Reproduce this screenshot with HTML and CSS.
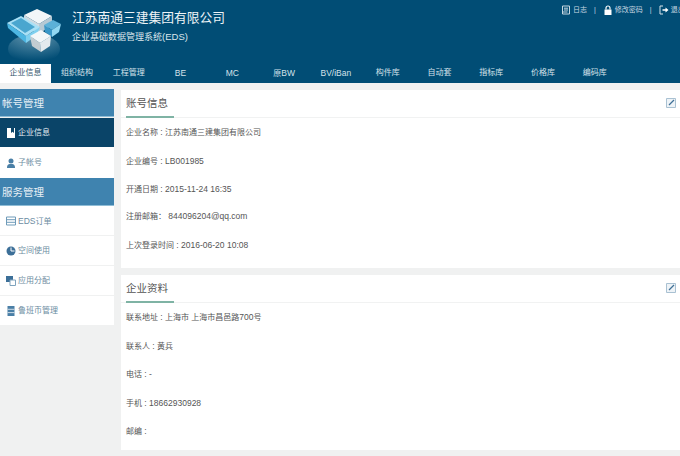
FILE: index.html
```html
<!DOCTYPE html>
<html lang="zh">
<head>
<meta charset="utf-8">
<title>企业基础数据管理系统</title>
<link rel="stylesheet" href="styles.css">
</head>
<body>
<header class="top">
  <div class="brand">
    <svg class="logo" width="66" height="64" viewBox="0 0 66 64">
      <defs>
        <radialGradient id="glow" cx="50%" cy="0%" r="90%">
          <stop offset="0" stop-color="#8fb6c8" stop-opacity=".75"/>
          <stop offset="1" stop-color="#8fb6c8" stop-opacity="0"/>
        </radialGradient>
      </defs>
      <ellipse cx="34" cy="49" rx="26" ry="15" fill="url(#glow)"/>
      <path d="M24 15l13-6 15 7-13 8z" fill="#f2f6f8"/>
      <path d="M24 15v10l15 9V24z" fill="#cfdbe2"/>
      <path d="M39 24l13-8v9l-13 9z" fill="#b6c9d4"/>
      <path d="M7 23l14-7 19 11-14 9z" fill="#a9e0f5"/>
      <path d="M11 23l10-5 14 9-10 6z" fill="#4aa6cf"/>
      <path d="M7 23l1 5 18 15V36z" fill="#4db6e2"/>
      <path d="M26 36l14-9-3 8-11 8z" fill="#7fd0ef"/>
      <path d="M44 25l9-5 8 4-9 6z" fill="#5cb1d8"/>
      <path d="M44 25l1 7 7 5v-7z" fill="#3a97c7"/>
      <path d="M52 30l9-6-2 8-7 5z" fill="#92d8f2"/>
      <path d="M30 36l11-6 10 6-11 7z" fill="#f4f7f8"/>
      <path d="M30 36l2 10 9 6-1-9z" fill="#c3ccd1"/>
      <path d="M40 43l11-7-1 10-9 6z" fill="#e4eaed"/>
    </svg>
    <div class="titles">
      <h1 class="company">江苏南通三建集团有限公司</h1>
      <p class="system">企业基础数据管理系统<span class="sys-code">(EDS)</span></p>
    </div>
  </div>
  <div class="tools">
    <span class="tool">
      <svg class="tool-icon" width="10" height="10" viewBox="0 0 10 10"><path d="M1.500 1h7v8h-7zM3 3.200h4M3 5h4M1.500 7h5" fill="none" stroke="#c8d8e2" stroke-width="1"/></svg>
      日志
    </span>
    <span class="sep">|</span>
    <span class="tool">
      <svg class="tool-icon" width="10" height="10" viewBox="0 0 10 10"><path d="M1.500 4.500h7V10h-7z" fill="#fff"/><path d="M3 4.500V3a2 2 0 0 1 4 0v1.500" fill="none" stroke="#fff" stroke-width="1.200"/></svg>
      修改密码
    </span>
    <span class="sep">|</span>
    <span class="tool">
      <svg class="tool-icon" width="10" height="10" viewBox="0 0 10 10"><path d="M4 1H1v8h3" fill="none" stroke="#d8e4ea" stroke-width="1"/><path d="M3.500 4.200h3V2.500L9.500 5 6.500 7.500V5.800h-3z" fill="#fff"/></svg>
      退出
    </span>
  </div>
  <nav class="nav">
    <a class="nav-item active">企业信息</a>
    <a class="nav-item">组织结构</a>
    <a class="nav-item">工程管理</a>
    <a class="nav-item"><span class="num">BE</span></a>
    <a class="nav-item"><span class="num">MC</span></a>
    <a class="nav-item">原<span class="num">BW</span></a>
    <a class="nav-item"><span class="num">BV/iBan</span></a>
    <a class="nav-item">构件库</a>
    <a class="nav-item">自动套</a>
    <a class="nav-item">指标库</a>
    <a class="nav-item">价格库</a>
    <a class="nav-item">编码库</a>
  </nav>
</header>
<div class="body">
  <aside class="side">
    <div class="side-head">帐号管理</div>
    <a class="side-item current">
      <svg width="10" height="10" viewBox="0 0 10 10"><path d="M1 0h8v10H1z" fill="#fff"/><path d="M5 0h3v5L6.500 3.800 5 5z" fill="#0a4468"/></svg>
      企业信息
    </a>
    <a class="side-item tall">
      <svg width="10" height="10" viewBox="0 0 10 10"><circle cx="5" cy="3" r="2.500" fill="#4a7fa6"/><path d="M1 10c0-4 2-4 4-4s4 0 4 4z" fill="#4a7fa6"/></svg>
      子帐号
    </a>
    <div class="side-head second">服务管理</div>
    <a class="side-item line">
      <svg width="10" height="10" viewBox="0 0 10 10"><path d="M.500 1h9v8h-9zM.500 3.700h9M.500 6.300h9" fill="none" stroke="#6f9bb9" stroke-width="1"/></svg>
      <span><span class="num">EDS</span>订单</span>
    </a>
    <a class="side-item line">
      <svg width="10" height="10" viewBox="0 0 10 10"><circle cx="5" cy="5" r="4.500" fill="#3c6f98"/><path d="M5 1.500V5h3.500" fill="none" stroke="#fff" stroke-width="1"/></svg>
      空间使用
    </a>
    <a class="side-item line">
      <svg width="10" height="10" viewBox="0 0 10 10"><path d="M0 0h7v6H0z" fill="#3c6f98"/><path d="M4 4h5.500v5.500H4z" fill="#fff" stroke="#7ea3bd"/></svg>
      应用分配
    </a>
    <a class="side-item line">
      <svg width="10" height="10" viewBox="0 0 10 10"><path d="M1.500 0h7v10h-7z" fill="#4a7fa6"/><path d="M1.500 3.300h7M1.500 6.600h7" stroke="#cfdde7"/></svg>
      鲁班币管理
    </a>
  </aside>
  <main class="main">
    <section class="card first">
      <div class="card-head">
        <h2 class="card-title">账号信息</h2>
        <svg class="edit" width="10" height="10" viewBox="0 0 10 10"><path d="M.500 .500h9v9h-9z" fill="#eef3f7" stroke="#a9c1d2"/><path d="M3 7L8 2" stroke="#3f7097" stroke-width="1.300"/></svg>
      </div>
      <div class="rows">
        <p class="row">企业名称<span class="num"> : </span>江苏南通三建集团有限公司</p>
        <p class="row">企业编号<span class="num"> : LB001985</span></p>
        <p class="row short">开通日期<span class="num"> : 2015-11-24 16:35</span></p>
        <p class="row">注册邮箱：<span class="num"> 844096204@qq.com</span></p>
        <p class="row">上次登录时间<span class="num"> : 2016-06-20 10:08</span></p>
      </div>
    </section>
    <section class="card second">
      <div class="card-head">
        <h2 class="card-title">企业资料</h2>
        <svg class="edit" width="10" height="10" viewBox="0 0 10 10"><path d="M.500 .500h9v9h-9z" fill="#eef3f7" stroke="#a9c1d2"/><path d="M3 7L8 2" stroke="#3f7097" stroke-width="1.300"/></svg>
      </div>
      <div class="rows">
        <p class="row">联系地址<span class="num"> : </span>上海市 上海市昌邑路<span class="num">700</span>号</p>
        <p class="row">联系人<span class="num"> : </span>黄兵</p>
        <p class="row">电话<span class="num"> : -</span></p>
        <p class="row">手机<span class="num"> : 18662930928</span></p>
        <p class="row">邮编<span class="num"> :</span></p>
      </div>
    </section>
  </main>
</div>
</body>
</html>
```
FILE: styles.css
```css
* { box-sizing: border-box; }
html, body { margin: 0; height: 100%; overflow: hidden; }
body {
  background: #f0f1f1;
  color: #555;
  font-family: "Liberation Sans", "Noto Sans CJK SC", sans-serif;
  font-size: 8px;
}
svg { display: block; flex: none; }
.num { font-size: 8.500px; }
.top {
  position: relative;
  height: 83px;
  background: #014d75;
  color: #e4edf2;
  display: flex;
  flex-direction: column;
}
.brand { height: 64px; display: flex; align-items: flex-start; }
.logo { margin-left: 0; }
.titles { margin-left: 6px; padding-top: 9px; }
.company { margin: 0; font-size: 12.750px; font-weight: 400; line-height: 17px; color: #eef4f7; }
.system { margin: 4px 0 0; font-size: 9px; line-height: 13px; color: #dbe6ec; }
.sys-code { font-size: 9.500px; }
.tools {
  position: absolute;
  top: 4px;
  left: 561px;
  width: 119px;
  height: 12px;
  display: flex;
  align-items: center;
  white-space: nowrap;
  overflow: hidden;
  font-size: 7px;
  line-height: 12px;
  color: #c8d8e2;
}
.tool { display: flex; align-items: center; gap: 2px; flex: none; }
.sep { margin: 0 7px; flex: none; }
.nav { height: 19px; display: flex; align-items: stretch; }
.nav-item {
  width: 51.800px;
  flex: none;
  text-align: center;
  font-size: 8px;
  line-height: 18px;
  color: #d5e2ea;
}
.nav-item:first-child { width: 51px; }
.nav-item.active { background: #fff; color: #33566c; }
.body { display: flex; align-items: flex-start; gap: 7px; padding-top: 6px; }
.side { width: 114px; flex: none; }
.side-head {
  height: 28px;
  display: flex;
  align-items: center;
  padding: 0 0 0 2px;
  background: #3f83af;
  color: #e8f0f5;
  font-size: 10.500px;
  line-height: 14px;
  border-bottom: 1px solid #8fbdd6;
}
.side-item {
  display: flex;
  align-items: center;
  gap: 2px;
  padding: 1px 0 0 6px;
  background: #fff;
  color: #6c8ca2;
  font-size: 8px;
  line-height: 12px;
}
.side-item.current { height: 29px; margin-top: 1px; background: #0a4468; color: #e5edf2; }
.side-item.tall { height: 31px; }
.side-item.line { height: 30px; border-bottom: 1px solid #f0f1f1; }
.main { flex: 1; min-width: 0; display: flex; flex-direction: column; gap: 7px; margin-top: 1px; }
.card { background: #fff; }
.card.first { height: 178px; }
.card.second { height: 175px; }
.card-head {
  position: relative;
  height: 28px;
  border-bottom: 1px solid #f1f2f2;
  padding-left: 5px;
}
.card-title {
  height: 28px;
  width: 48px;
  margin: 0;
  border-bottom: 2px solid #7fb3a4;
  font-size: 10.500px;
  font-weight: 400;
  line-height: 27px;
  color: #555;
}
.edit { position: absolute; right: 4px; top: 8px; }
.rows { padding-left: 5px; }
.row { margin: 0; height: 28.500px; line-height: 28.500px; font-size: 8px; color: #555; }
.row.short { height: 27px; }
```
